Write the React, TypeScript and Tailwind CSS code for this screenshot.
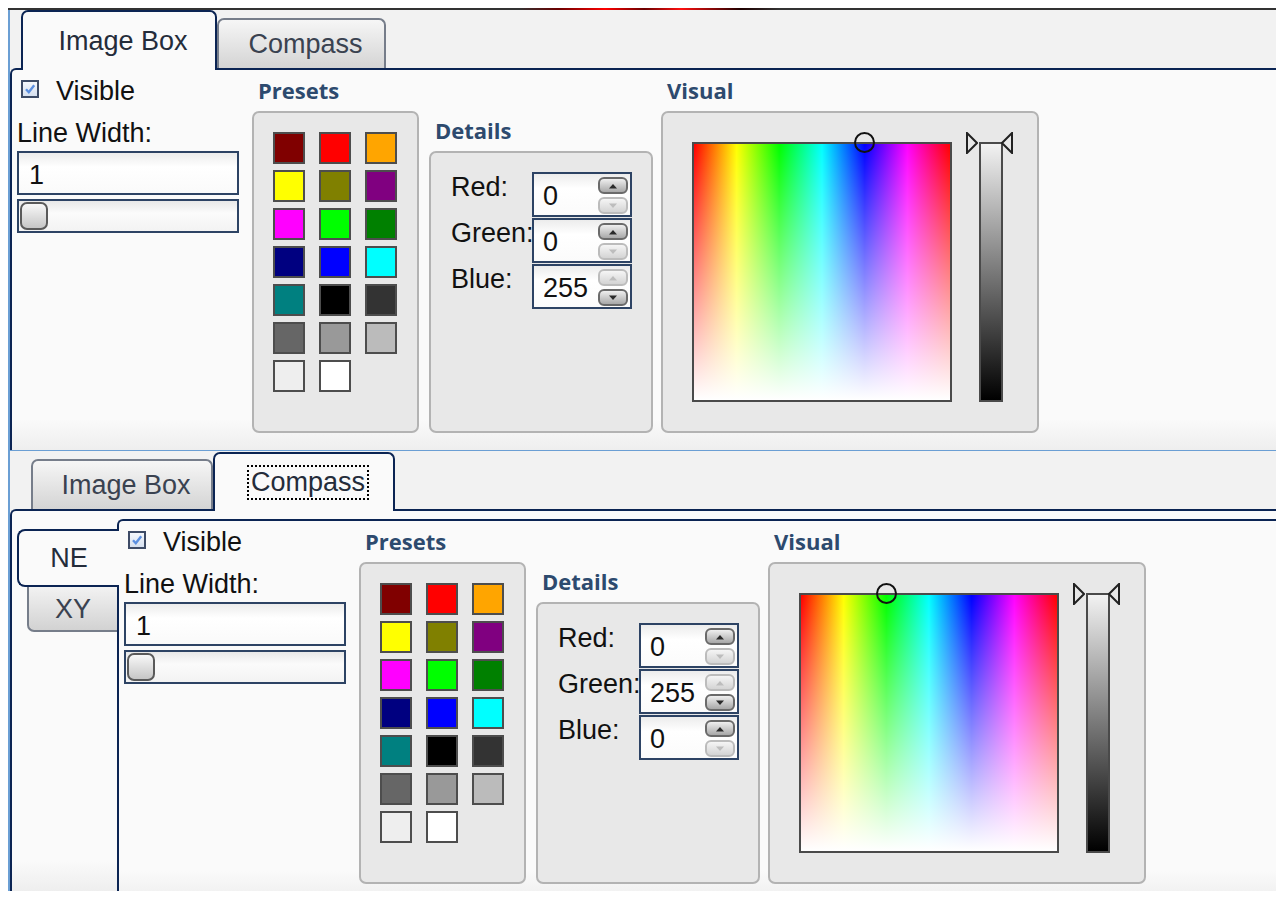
import React from 'react';

const presets = [
  '#800000', '#ff0000', '#ffa500',
  '#ffff00', '#808000', '#800080',
  '#ff00ff', '#00ff00', '#008000',
  '#000080', '#0000ff', '#00ffff',
  '#008080', '#000000', '#333333',
  '#666666', '#999999', '#bbbbbb',
  '#eeeeee', '#ffffff',
];

function Heading({ children }: { children: React.ReactNode }) {
  return (
    <div className="h-[41px] pl-[6px] font-['Open_Sans',sans-serif] text-[22px] font-bold leading-[41px] text-[#2d4a6e]">
      {children}
    </div>
  );
}

function Checkbox() {
  return (
    <div className="ml-[4px] mt-[10px] flex h-[18px] w-[18px] items-center justify-center border-2 border-[#3d4b66] bg-[linear-gradient(#f4f7fc,#d6e0ef)]">
      <svg width="12" height="12" viewBox="0 0 12 12">
        <path d="M2 6.2 L4.8 9.2 L10.2 2.2" stroke="#5b8fe0" strokeWidth="2.4" fill="none" />
      </svg>
    </div>
  );
}

function SpinButton({ up, on }: { up: boolean; on: boolean }) {
  return (
    <div
      className={
        on
          ? 'flex h-[17px] w-[30px] items-center justify-center rounded-[6px] border-2 border-[#6a6a6a] bg-[linear-gradient(#efefef,#a8a8a8)]'
          : 'flex h-[17px] w-[30px] items-center justify-center rounded-[6px] border-2 border-[#bcbcbc] bg-[linear-gradient(#f5f5f5,#d4d4d4)]'
      }
    >
      <svg width="10" height="6" viewBox="0 0 10 6">
        <polygon
          points={up ? '1,5.5 9,5.5 5,1' : '1,0.5 9,0.5 5,5'}
          fill={on ? '#2a2a2a' : '#bdbdbd'}
        />
      </svg>
    </div>
  );
}

function NumberField({ value }: { value: number }) {
  return (
    <div className="flex h-[45px] w-[100px] items-start border-2 border-[#2d4364] bg-[linear-gradient(#ececec,#ffffff_35%,#fbfbfb)]">
      <div className="w-[58px] whitespace-nowrap pl-[9px] pt-[7px] leading-[30px]">{value}</div>
      <div className="ml-auto mr-[2px] mt-[3px] flex flex-col gap-[3px]">
        <SpinButton up on={value < 255} />
        <SpinButton up={false} on={value > 0} />
      </div>
    </div>
  );
}

function ColorEditor({ r, g, b, hue }: { r: number; g: number; b: number; hue: number }) {
  const rows: [string, number][] = [
    ['Red:', r],
    ['Green:', g],
    ['Blue:', b],
  ];

  return (
    <div className="flex h-full pb-[17px] pl-[5px]">
      {/* left column */}
      <div className="w-[222px] shrink-0">
        <div className="flex items-start">
          <Checkbox />
          <span className="ml-[17px] mt-[6px] leading-[30px]">Visible</span>
        </div>
        <div className="mt-[12px] leading-[30px]">Line Width:</div>
        <div className="mt-[3px] h-[44px] border-2 border-[#2d4364] bg-[linear-gradient(#ececec,#ffffff_35%,#fafafa)] pl-[10px] pt-[7px] leading-[30px]">
          1
        </div>
        <div className="mt-[4px] h-[34px] border-2 border-[#2d4364] bg-[linear-gradient(#e8e8e8,#fbfbfb_40%,#f3f3f3)] pl-[1px] pt-[1px]">
          <div className="h-[28px] w-[28px] rounded-[7px] border-2 border-[#5a5a5a] bg-[linear-gradient(#f8f8f8,#c6c6c6)]" />
        </div>
      </div>

      {/* presets */}
      <div className="ml-[13px] flex w-[167px] shrink-0 flex-col">
        <Heading>Presets</Heading>
        <div className="flex-1 rounded-[7px] border-2 border-[#b3b3b3] bg-[#e8e8e8] pl-[19px] pt-[19px]">
          <div className="grid grid-cols-[repeat(3,32px)] gap-x-[14px] gap-y-[6px]">
            {presets.map((c) => (
              <div key={c} className="h-[32px] w-[32px] border-2 border-[#4d4d4d]" style={{ backgroundColor: c }} />
            ))}
          </div>
        </div>
      </div>

      {/* details */}
      <div className="ml-[10px] flex w-[224px] shrink-0 flex-col pt-[40px]">
        <Heading>Details</Heading>
        <div className="flex-1 rounded-[7px] border-2 border-[#b3b3b3] bg-[#e8e8e8] pl-[20px] pt-[19px]">
          <div className="grid grid-cols-[81px_100px] gap-y-[1px]">
            {rows.map(([label, v]) => (
              <React.Fragment key={label}>
                <div className="whitespace-nowrap leading-[30px]">{label}</div>
                <NumberField value={v} />
              </React.Fragment>
            ))}
          </div>
        </div>
      </div>

      {/* visual */}
      <div className="ml-[8px] flex w-[378px] shrink-0 flex-col">
        <Heading>Visual</Heading>
        <div className="flex-1 rounded-[7px] border-2 border-[#b3b3b3] bg-[#e8e8e8] pl-[29px] pt-[29px]">
          <div className="flex items-start">
            <div className="relative h-[260px] w-[260px] border-2 border-[#4a4a4a]">
              <div className="h-full w-full bg-[linear-gradient(to_right,#ff0000,#ffff00_16.67%,#00ff00_33.33%,#00ffff_50%,#0000ff_66.67%,#ff00ff_83.33%,#ff0000)]">
                <div className="h-full w-full bg-[linear-gradient(to_bottom,rgba(255,255,255,0),#ffffff)]" />
              </div>
              <div
                className="absolute top-[-12px] h-[21px] w-[21px] rounded-full border-2 border-[#111111]"
                style={{ left: (hue / 360) * 256 - 10.5 }}
              />
            </div>
            <div className="relative ml-[27px] h-[260px] w-[24px] border-2 border-[#4a4a4a] bg-[linear-gradient(#f2f2f2,#000000)]">
              <svg className="absolute left-[-15px] top-[-12px]" width="12" height="22" viewBox="0 0 12 22">
                <polygon points="1,1 11,11 1,21" fill="#e8e8e8" stroke="#222222" strokeWidth="2" />
              </svg>
              <svg className="absolute left-[20px] top-[-12px]" width="12" height="22" viewBox="0 0 12 22">
                <polygon points="11,1 1,11 11,21" fill="none" stroke="#222222" strokeWidth="2" />
              </svg>
            </div>
          </div>
        </div>
      </div>
    </div>
  );
}

function ActiveTab({ children, className }: { children: React.ReactNode; className: string }) {
  return (
    <div
      className={`relative z-10 mb-[-2px] flex items-center justify-center rounded-t-[7px] border-x-2 border-t-2 border-[#0b2453] bg-[#fafafa] pl-[8px] text-[#242c3a] ${className}`}
    >
      {children}
    </div>
  );
}

function InactiveTab({ children, className }: { children: React.ReactNode; className: string }) {
  return (
    <div
      className={`flex h-[50px] items-center justify-center rounded-t-[7px] border-x-2 border-t-2 border-[#767d8a] bg-[linear-gradient(#f6f6f6,#d4d4d4)] pl-[8px] text-[#3a4250] ${className}`}
    >
      {children}
    </div>
  );
}

export default function App() {
  return (
    <div className="min-h-screen bg-white pl-2 pt-2 font-['Liberation_Sans',Arial,sans-serif] text-[27px] text-[#111111]">
      <div className="h-[883px] w-[1268px] overflow-hidden">
        {/* top rule with glow */}
        <div className="flex h-[2px]">
          <div className="w-[511px] bg-[#333333]" />
          <div className="w-[261px] bg-[linear-gradient(to_right,#333333,#6b0000_15%,#ff0000_33%,#6a0000_48%,#ff1010_62%,#1e0000_85%,#333333)]" />
          <div className="flex-1 bg-[#333333]" />
        </div>

        <div className="h-full border-l-2 border-[#6b9fd4] bg-[#f2f2f2]">
          {/* ── Image Box tab set ── */}
          <div className="flex h-[58px] items-end pl-[11px]">
            <ActiveTab className="h-[60px] w-[196px]">Image Box</ActiveTab>
            <InactiveTab className="w-[169px]">Compass</InactiveTab>
          </div>
          <div className="h-[382px] rounded-tl-[6px] border-l-2 border-t-2 border-[#0b2453] bg-[linear-gradient(#fafafa_92%,#eeeeee)]">
            <ColorEditor r={0} g={0} b={255} hue={240} />
          </div>

          <div className="h-px bg-[#6b9fd4]" />

          {/* ── Compass tab set ── */}
          <div className="flex h-[58px] items-end pl-[21px]">
            <InactiveTab className="w-[182px]">Image Box</InactiveTab>
            <ActiveTab className="h-[59px] w-[182px]">
              <span className="border-2 border-dotted border-black px-[2px] leading-[31px]">Compass</span>
            </ActiveTab>
          </div>
          <div className="flex h-[382px] rounded-tl-[6px] border-l-2 border-t-2 border-[#0b2453] bg-[linear-gradient(#fafafa_92%,#eeeeee)] pt-[8px]">
            <div className="w-[105px] shrink-0 pt-[10px]">
              <div className="relative z-10 ml-[5px] mr-[-2px] flex h-[58px] items-center justify-center rounded-l-[8px] border-y-2 border-l-2 border-[#0b2453] bg-[#fafafa] leading-[30px] text-[#242c3a]">
                NE
              </div>
              <div className="ml-[15px] flex h-[45px] items-center justify-center rounded-bl-[7px] border-b-2 border-l-2 border-[#767d8a] bg-[linear-gradient(#f2f2f2,#d2d2d2)] leading-[30px] text-[#3a4250]">
                XY
              </div>
            </div>
            <div className="h-[382px] flex-1 rounded-tl-[6px] border-l-2 border-t-2 border-[#0b2453] bg-[linear-gradient(#fafafa_92%,#eeeeee)]">
              <ColorEditor r={0} g={255} b={0} hue={120} />
            </div>
          </div>
        </div>
      </div>
    </div>
  );
}
